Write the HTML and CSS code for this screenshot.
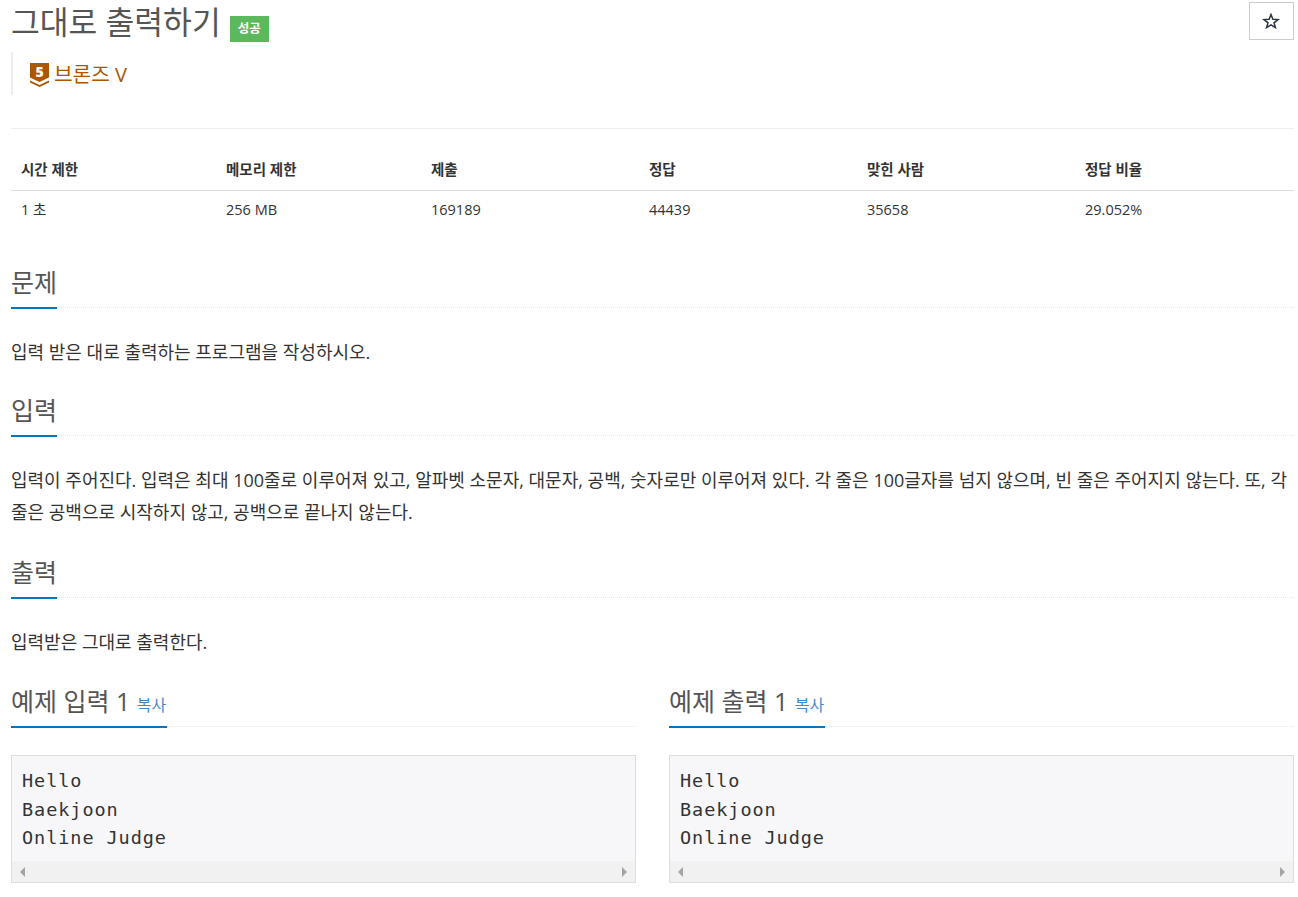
FILE: index.html
```html
<!DOCTYPE html>
<html lang="ko">
<head>
<meta charset="utf-8">
<title>그대로 출력하기</title>
<link rel="stylesheet" href="styles.css">
</head>
<body>
<main class="page">
  <header class="top">
    <div class="title-block">
      <h1 class="title"><span>그대로 출력하기</span><span class="badge">성공</span></h1>
      <blockquote class="tier">
        <svg class="tier-icon" width="20" height="24" viewBox="0 0 20 24"><path fill="#ad5600" d="M0 0H19V14.500L9.500 19L0 14.500Z"/><path fill="#ad5600" d="M0 17.500L9.500 22L19 17.500V19.500L9.500 24L0 19.500Z"/><text x="9.500" y="13.500" text-anchor="middle" class="tier-num">5</text></svg>
        <span class="tier-name">브론즈 V</span>
      </blockquote>
    </div>
    <button class="star" type="button" aria-label="즐겨찾기"><svg class="star-icon" width="18" height="16" viewBox="0 0 18 16"><path fill="none" stroke="#2b3440" stroke-width="1.500" d="M9 1.500L10.900 6.300L16 6.600L12 9.800L13.400 14.600L9 11.900L4.600 14.600L6 9.800L2 6.600L7.100 6.300Z"/></svg></button>
  </header>
  <hr class="rule">
  <table class="info">
    <thead>
      <tr><th>시간 제한</th><th>메모리 제한</th><th>제출</th><th>정답</th><th>맞힌 사람</th><th>정답 비율</th></tr>
    </thead>
    <tbody>
      <tr><td>1 초</td><td>256 MB</td><td>169189</td><td>44439</td><td>35658</td><td>29.052%</td></tr>
    </tbody>
  </table>
  <section class="sec">
    <div class="sec-head"><h2 class="sec-title">문제</h2></div>
    <p class="sec-text">입력 받은 대로 출력하는 프로그램을 작성하시오.</p>
  </section>
  <section class="sec">
    <div class="sec-head"><h2 class="sec-title">입력</h2></div>
    <p class="sec-text sec-text-long">입력이 주어진다. 입력은 최대 100줄로 이루어져 있고, 알파벳 소문자, 대문자, 공백, 숫자로만 이루어져 있다. 각 줄은 100글자를 넘지 않으며, 빈 줄은 주어지지 않는다. 또, 각 줄은 공백으로 시작하지 않고, 공백으로 끝나지 않는다.</p>
  </section>
  <section class="sec">
    <div class="sec-head"><h2 class="sec-title">출력</h2></div>
    <p class="sec-text">입력받은 그대로 출력한다.</p>
  </section>
  <div class="samples">
    <section class="sample">
      <div class="sec-head"><h2 class="sec-title">예제 입력 1 <a class="copy">복사</a></h2></div>
      <div class="code">
        <pre class="code-text">Hello
Baekjoon
Online Judge</pre>
        <div class="scrollbar"><i class="arrow-left"></i><i class="arrow-right"></i></div>
      </div>
    </section>
    <section class="sample">
      <div class="sec-head"><h2 class="sec-title">예제 출력 1 <a class="copy">복사</a></h2></div>
      <div class="code">
        <pre class="code-text">Hello
Baekjoon
Online Judge</pre>
        <div class="scrollbar"><i class="arrow-left"></i><i class="arrow-right"></i></div>
      </div>
    </section>
  </div>
</main>
</body>
</html>
```
FILE: styles.css
```css
* { box-sizing: border-box; }
html, body { margin: 0; padding: 0; background: #fff; }
body {
  font-family: "Open Sans", "Noto Sans CJK KR", sans-serif;
  font-size: 14px;
  color: #333;
  overflow: hidden;
  height: 897px;
}
.page { padding: 0 4px 0 11px; }
.top { display: flex; justify-content: space-between; align-items: flex-start; height: 128px; }
.title {
  margin: 0;
  font-size: 31.300px;
  font-weight: 400;
  line-height: 44px;
  color: #555;
  height: 44px;
  display: flex;
  align-items: flex-start;
}
.badge {
  margin-left: 9px;
  margin-top: 16px;
  width: 39px;
  height: 26px;
  background: #5cb85c;
  color: #fff;
  font-size: 12.500px;
  font-weight: 700;
  line-height: 26px;
  text-align: center;
}
.tier {
  margin: 8px 0 0;
  height: 43px;
  border-left: 2px solid #eee;
  padding: 0 0 0 17px;
  display: flex;
  align-items: center;
  gap: 4px;
}
.tier-icon { display: block; margin-top: 3px; }
.tier-num { font-family: "Open Sans", sans-serif; font-size: 14px; font-weight: 800; fill: #fff; }
.tier-name { font-size: 20.200px; line-height: 28px; color: #ad5600; }
.star {
  width: 45px;
  height: 38px;
  margin: 2px 0 0;
  padding: 0;
  border: 1px solid #ccc;
  background: #fff;
  display: flex;
  align-items: center;
  justify-content: center;
}
.star-icon { display: block; margin-top: -1px; margin-left: -1px; }
.rule { margin: 0; border: 0; border-top: 1px solid #eee; height: 1px; }
.info { width: 100%; margin-top: 21px; border-collapse: collapse; table-layout: fixed; }
.info th, .info td { padding: 8px 10px; text-align: left; line-height: 24px; font-size: 14.500px; }
.info th { font-weight: 700; color: #333; border-bottom: 1px solid #ddd; height: 40px; }
.info td { height: 38px; padding: 7px 10px; }
.info th:nth-child(1), .info th:nth-child(2) { width: 205px; }
.info th:nth-child(3), .info th:nth-child(4), .info th:nth-child(5) { width: 218px; }
.sec-head {
  border-bottom: 1px dotted #e6e6e6;
  height: 49px;
  margin-top: 19px;
}
.sec:first-of-type .sec-head { margin-top: 30px; }
.sec-title {
  display: inline-block;
  margin: 0;
  font-size: 25px;
  font-weight: 400;
  line-height: 46px;
  height: 50px;
  color: #555;
  border-bottom: 2px solid #0076c0;
  white-space: nowrap;
}
.sec-text { margin: 28px 0 0; font-size: 18px; line-height: 32px; color: #333; }
.sec-text-long { margin-bottom: 21px; }
.samples { display: grid; grid-template-columns: 625px 625px; gap: 33px; }
.sample .sec-head { margin-top: 20px; }
.copy { font-size: 16px; color: #428bca; padding-right: 1px; }
.code {
  margin-top: 28px;
  border: 1px solid #ddd;
  background: #f7f7f9;
  height: 128px;
  display: flex;
  flex-direction: column;
}
.code-text {
  flex: 1;
  margin: 0;
  padding: 11px 10px 0;
  font-family: "DejaVu Sans Mono", "Liberation Mono", monospace;
  font-size: 18.500px;
  letter-spacing: 0.940px;
  line-height: 28.500px;
  color: #333;
}
.scrollbar {
  height: 21px;
  background: #f1f1f1;
  display: flex;
  justify-content: space-between;
  align-items: center;
  padding: 0 8px;
}
.arrow-left { width: 0; height: 0; border: 5px solid transparent; border-left-width: 0; border-right: 5px solid #a3a3a3; }
.arrow-right { width: 0; height: 0; border: 5px solid transparent; border-right-width: 0; border-left: 5px solid #a3a3a3; }
```
